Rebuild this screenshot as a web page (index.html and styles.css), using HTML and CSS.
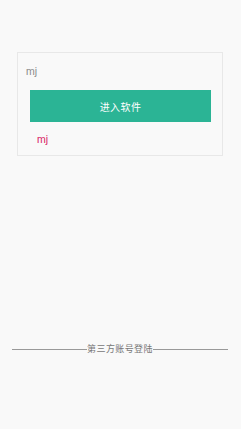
FILE: index.html
```html
<!DOCTYPE html>
<html lang="zh-CN">
  <head>
    <meta charset="UTF-8" />
    <meta name="viewport" content="width=device-width, initial-scale=1.0" />
    <title>登陆</title>
    <link rel="stylesheet" href="styles.css">
  </head>
  <body>
    <div class="page">
      <div class="card">
        <div class="user-input">mj</div>
        <button class="enter-btn">进入软件</button>
        <div class="user-name">mj</div>
      </div>
      <div class="third-party">
        <span class="line"></span>
        <span class="third-text">第三方账号登陆</span>
        <span class="line"></span>
      </div>
    </div>
  </body>
</html>
```

FILE: styles.css
```css
body {
  margin: 0;
  padding: 0;
  background-color: #f9f9f9;
  font-family: Roboto, "Noto Sans CJK SC", sans-serif;
}
.page {
  width: 241px;
  height: 429px;
  display: flex;
  flex-direction: column;
}
.card {
  margin: 52px 18px 0 17px;
  height: 104px;
  border: 1px solid #e8e8e8;
  background: #f9f9f9;
  box-sizing: border-box;
  display: flex;
  flex-direction: column;
}
.user-input {
  margin: 13px 0 0 8px;
  font-size: 10px;
  line-height: 12px;
  color: #888;
}
.enter-btn {
  margin: 12px 11px 0 12px;
  height: 32px;
  border: none;
  background-color: #2bb495;
  color: #fff;
  font-family: inherit;
  font-size: 10px;
  padding: 0;
  letter-spacing: 0.4px;
}
.user-name {
  margin: 12px 0 0 19px;
  font-size: 10px;
  line-height: 12px;
  color: #d8175f;
}
.third-party {
  margin: 187px 13px 0 12px;
  display: flex;
  align-items: center;
}
.line {
  flex: 1;
  height: 1px;
  background: #999;
}
.third-text {
  font-size: 9px;
  line-height: 12px;
  color: #777;
  letter-spacing: 0.4px;
}
```
